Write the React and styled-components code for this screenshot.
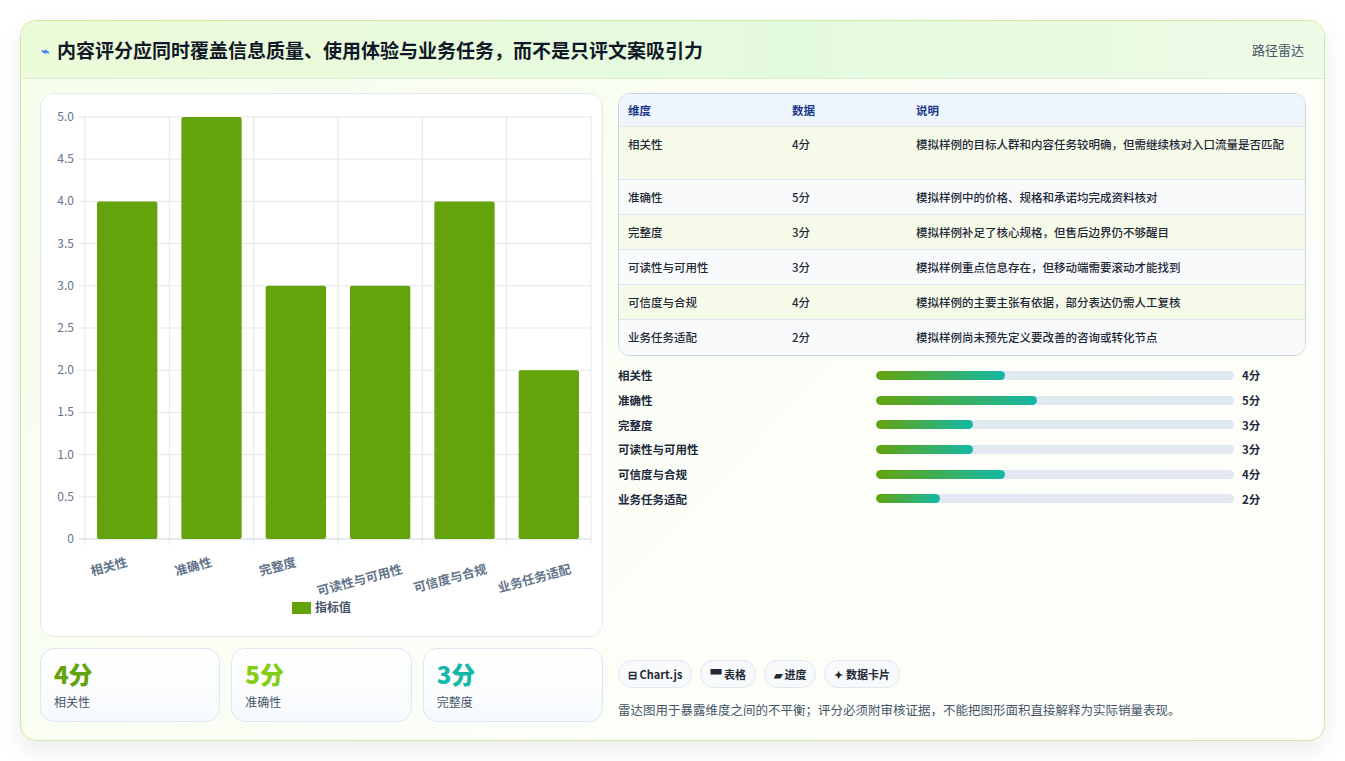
import React from "react";
import styled, { createGlobalStyle } from "styled-components";

const G = createGlobalStyle`
  html,body{margin:0;padding:0;background:#f3f4f6;}
  body{font-family:"Noto Sans CJK SC","Noto Sans",sans-serif;color:#1e293b;}
`;
const Page = styled.div`padding:20px;height:761px;box-sizing:border-box;background:#fff;`;
const Card = styled.div`
  width:1305px;height:721px;box-sizing:border-box;border:1px solid #cde9a3;border-radius:16px;
  background:linear-gradient(135deg,#f6fdea 0%,#fbfef6 50%,#fefefb 100%);
  box-shadow:0 10px 24px rgba(0,0,0,.08);overflow:hidden;display:flex;flex-direction:column;`;
const Header = styled.div`
  height:57px;display:flex;align-items:center;justify-content:space-between;padding:0 20px;
  background:linear-gradient(90deg,#ecfbd9,#e4fadf 60%,#eefbe6);border-bottom:1px solid #dcebd2;`;
const Title = styled.h1`margin:0;font-size:19px;font-weight:700;color:#111827;display:flex;align-items:center;gap:8px;`;
const Tag = styled.span`font-size:13px;color:#475569;`;
const Body = styled.div`flex:1;display:grid;grid-template-columns:563px 688px;gap:15px;padding:14px 19px 0 19px;`;
const Col = styled.div`display:flex;flex-direction:column;`;
const ChartBox = styled.div`height:544px;box-sizing:border-box;background:#fff;border:1px solid #e2e8f0;border-radius:14px;`;
const Stats = styled.div`display:grid;grid-template-columns:repeat(3,1fr);gap:11px;margin-top:11px;`;
const Stat = styled.div`height:74px;box-sizing:border-box;border:1px solid #dbe7f3;border-radius:14px;background:linear-gradient(180deg,#fff,#f7fafd);padding:10px 13px;`;
const Big = styled.div`font-size:24px;font-weight:800;color:${p=>p.c};line-height:30px;`;
const Small = styled.div`font-size:12px;color:#475569;margin-top:4px;`;
const Table = styled.div`border:1px solid #cbd5e1;border-radius:12px;overflow:hidden;background:#fff;`;
const Row = styled.div`display:grid;grid-template-columns:164px 124px 1fr;padding:0 9px;min-height:${p=>p.h||35}px;align-items:${p=>p.top?"start":"center"};
  padding-top:${p=>p.top?9:0}px;box-sizing:border-box;font-size:11.5px;font-weight:${p=>p.head?700:500};color:${p=>p.head?"#1e3a8a":"#1f2937"};
  background:${p=>p.head?"#eef5fd":p.alt?"#f6fae9":"#f8fafc"};border-bottom:${p=>p.last?"none":"1px solid #dfe6ee"};line-height:17px;`;
const Bars = styled.div`display:flex;flex-direction:column;gap:8px;margin-top:11px;`;
const BarRow = styled.div`display:grid;grid-template-columns:258px 358px 1fr;align-items:center;gap:0;font-size:11.5px;font-weight:600;height:16.7px;
  & > span:last-child{padding-left:8px;}`;
const Track = styled.div`height:9px;border-radius:5px;background:#e2e8f0;overflow:hidden;`;
const Fill = styled.div`height:100%;border-radius:5px;background:linear-gradient(90deg,#65a30d,#14b8a6);`;
const Chips = styled.div`display:flex;gap:8px;margin-top:auto;`;
const Chip = styled.div`height:28px;box-sizing:border-box;padding:0 9px;border:1px solid #e2e8f0;border-radius:14px;background:#f8fafc;font-size:11px;font-weight:600;color:#1f2937;display:flex;align-items:center;gap:3px;`;
const Note = styled.p`margin:12px 0 21px;font-size:12.5px;color:#475569;`;

const data=[["相关性",4,"模拟样例的目标人群和内容任务较明确，但需继续核对入口流量是否匹配"],["准确性",5,"模拟样例中的价格、规格和承诺均完成资料核对"],["完整度",3,"模拟样例补足了核心规格，但售后边界仍不够醒目"],["可读性与可用性",3,"模拟样例重点信息存在，但移动端需要滚动才能找到"],["可信度与合规",4,"模拟样例的主要主张有依据，部分表达仍需人工复核"],["业务任务适配",2,"模拟样例尚未预先定义要改善的咨询或转化节点"]];

function Chart(){
  const x0=44,x1=550,y0=445,u=84.4,cw=(x1-x0)/6;
  return <svg width="561" height="542" style={{display:"block"}} fontFamily="Noto Sans CJK SC,sans-serif">
    {[0,1,2,3,4,5,6].map(i=><line key={i} x1={x0+i*cw} x2={x0+i*cw} y1={22} y2={y0+6} stroke="#e5e7eb"/>)}
    {[0,0.5,1,1.5,2,2.5,3,3.5,4,4.5,5].map(v=><g key={v}><line x1={x0-6} x2={x1} y1={y0-v*u} y2={y0-v*u} stroke={v===0?"#cbd5e1":"#e5e7eb"}/>
      <text x={x0-11} y={y0-v*u+4} fontSize="12" fill="#64748b" textAnchor="end">{v===0?"0":v.toFixed(1)}</text></g>)}
    {data.map((d,i)=><rect key={i} x={x0+i*cw+12} y={y0-d[1]*u} width={cw-24} height={d[1]*u} fill="#65a30d" rx="2"/>)}
    {data.map((d,i)=>{const tx=x0+i*cw+cw/2+(d[0].length>3?23:1);const ty=(d[0].length>3?479:472);return <text key={i} x={tx} y={ty} fontSize="12.5" fontWeight="600" fill="#64748b" textAnchor="end" transform={`rotate(-15 ${tx} ${ty})`}>{d[0]}</text>})}
    <rect x="251" y="508" width="19" height="12" fill="#65a30d"/>
    <text x="274" y="518" fontSize="12" fill="#475569" fontWeight="600">指标值</text>
  </svg>;
}

export default function App(){
  return <Page><G/><Card>
    <Header><Title><span style={{color:"#3b82f6",fontSize:14}}>⌁</span>内容评分应同时覆盖信息质量、使用体验与业务任务，而不是只评文案吸引力</Title><Tag>路径雷达</Tag></Header>
    <Body>
      <Col>
        <ChartBox><Chart/></ChartBox>
        <Stats>
          <Stat><Big c="#65a30d">4分</Big><Small>相关性</Small></Stat>
          <Stat><Big c="#84cc16">5分</Big><Small>准确性</Small></Stat>
          <Stat><Big c="#14b8a6">3分</Big><Small>完整度</Small></Stat>
        </Stats>
      </Col>
      <Col>
        <Table>
          <Row head h={33}><span>维度</span><span>数据</span><span>说明</span></Row>
          {data.map((d,i)=><Row key={i} alt={i%2===0} h={i===0?53:35} top={i===0} last={i===5}><span>{d[0]}</span><span>{d[1]}分</span><span>{d[2]}</span></Row>)}
        </Table>
        <Bars>{data.map((d,i)=><BarRow key={i}><span>{d[0]}</span><Track><Fill style={{width:`${d[1]/5*45+(d[1]===2?0:0)}%`}}/></Track><span>{d[1]}分</span></BarRow>)}</Bars>
        <Chips><Chip>⊟ Chart.js</Chip><Chip>▀ 表格</Chip><Chip>▰ 进度</Chip><Chip>✦ 数据卡片</Chip></Chips>
        <Note>雷达图用于暴露维度之间的不平衡；评分必须附审核证据，不能把图形面积直接解释为实际销量表现。</Note>
      </Col>
    </Body>
  </Card></Page>;
}
